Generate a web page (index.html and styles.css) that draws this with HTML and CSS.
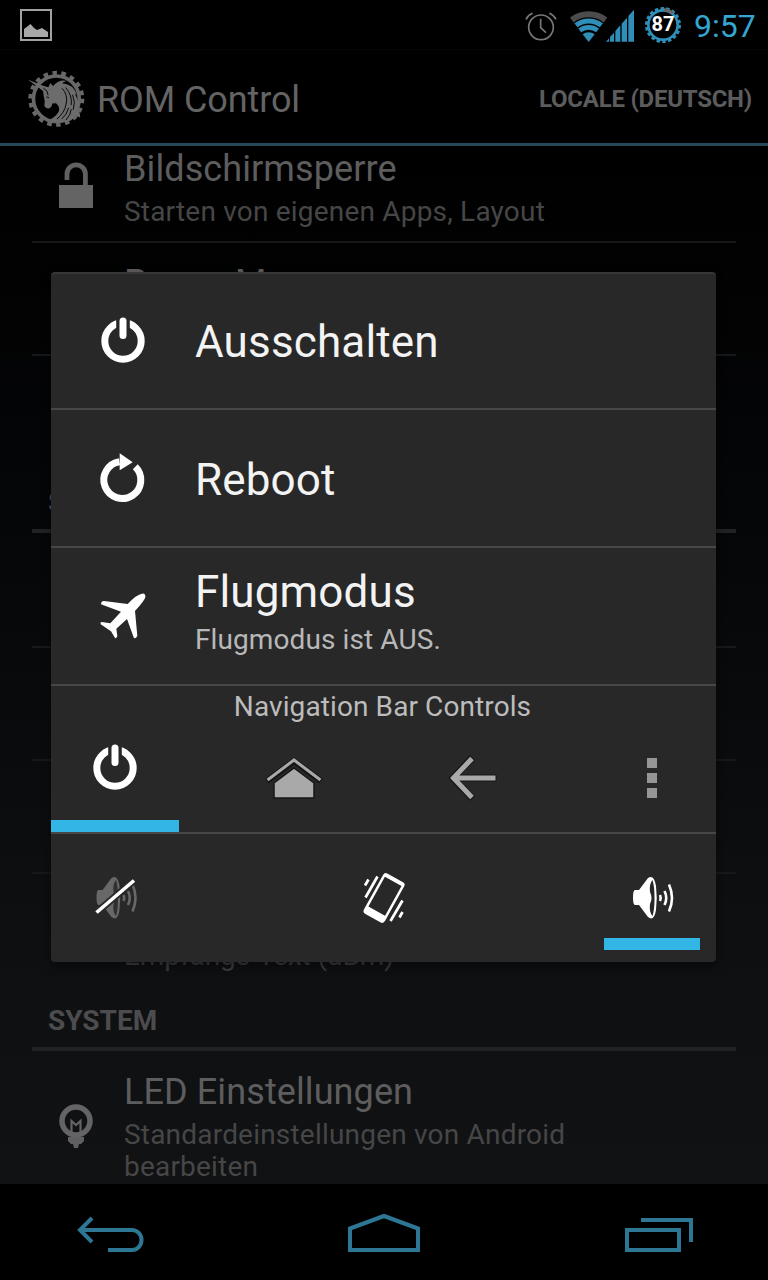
FILE: index.html
```html
<!DOCTYPE html>
<html lang="de">
<head>
<meta charset="UTF-8">
<meta name="viewport" content="width=device-width, initial-scale=1.0">
<title>ROM Control</title>
<link rel="stylesheet" href="styles.css">
</head>
<body>
<div class="screen">
  <div class="status-bar">
    <svg class="photo-icon" viewBox="0 0 32 32">
      <rect x="1" y="1" width="30" height="30" fill="none" stroke="#a2a2a2" stroke-width="2"/>
      <path d="M4 28V20L8 17L10.500 15L14 19L17 21L22 19L28 23V28Z" fill="#a8a8a8"/>
    </svg>
    <div class="status-icons">
      <svg class="alarm-icon" viewBox="42 20 102 102" fill="none" stroke="#777" stroke-width="5">
        <circle cx="93" cy="78" r="37"/>
        <path d="M92 52V79L108 94M48 54Q54 41 68 36M118 36Q131 41 138 54"/>
      </svg>
      <svg class="signal-icon" viewBox="174 20 201 102">
        <g fill="none" stroke="#2f8fb8">
          <path d="M185.600 56A83 83 0 0 1 286.400 56" stroke="#4c4c4c" stroke-width="18"/>
          <path d="M197.800 72A63 63 0 0 1 274.200 72" stroke-width="15"/>
          <path d="M209.300 87A44 44 0 0 1 262.700 87" stroke-width="14"/>
        </g>
        <path d="M218 98.500A29.600 29.600 0 0 1 254 98.500L236 122Z" fill="#2f8fb8"/>
        <path d="M288 121L297 111V121ZM300 121V107L312 94V121ZM316 121V89L331 72V121ZM335 121V67L351 49V121ZM355 121V44L372 25V121Z" fill="#2f8fb8"/>
      </svg>
      <div class="battery">
        <svg viewBox="402 16 114 114" fill="none" stroke="#2f8fb8">
          <circle cx="459" cy="73" r="44" stroke-width="8"/>
          <circle cx="459" cy="73" r="49" stroke-width="10" pathLength="180" stroke-dasharray="6 4"/>
          <path d="M462 27A46 46 0 0 1 488 37" stroke="#666" stroke-width="10"/>
        </svg>
        <span>87</span>
      </div>
      <span class="clock">9:57</span>
    </div>
  </div>

  <div class="action-bar">
    <svg class="app-icon" viewBox="82 206 174 178">
      <g fill="none" stroke="#686868">
        <circle cx="170" cy="296" r="69" stroke-width="11"/>
        <circle cx="170" cy="296" r="78" stroke-width="13" pathLength="180" stroke-dasharray="5 5"/>
      </g>
      <path d="M84 238L128 256L146 261L152 248L160 257Q180 236 202 242Q190 244 188 249Q224 252 232 286L225 279Q240 304 236 326L230 318Q242 335 242 352L227 346Q215 368 192 364Q168 370 146 362Q174 346 178 332Q181 319 169 309L158 310Q156 323 146 325Q136 324 134 316Q137 302 132 288L130 272Z" fill="#6c6c6c"/>
      <path d="M131 264L142 273L145 285M140 290L148 293M187 264Q207 284 199 314Q195 337 172 357M198 262Q219 286 215 315M219 284Q229 306 221 329M207 323Q202 344 186 357M215 327Q214 344 199 360" fill="none" stroke="#080808" stroke-width="3"/>
    </svg>
    <span class="app-title">ROM Control</span>
    <span class="locale">LOCALE (DEUTSCH)</span>
  </div>

  <div class="settings">
    <div class="row first">
      <svg class="row-icon" viewBox="0 0 48 48">
        <path d="M11 20V14A9.200 9.200 0 0 1 29.400 14V26" fill="none" stroke="#606060" stroke-width="4.800"/>
        <path d="M3 25H37V48H3Z" fill="#646464"/>
      </svg>
      <div>
        <div class="row-title">Bildschirmsperre</div>
        <div class="row-sub">Starten von eigenen Apps, Layout</div>
      </div>
    </div>
    <div class="row power-menu">
      <div class="row-icon"></div>
      <div>
        <div class="row-title">Power Menu</div>
      </div>
    </div>
    <div class="row last"></div>
    <div class="section">STATUSBAR</div>
    <div class="row after-section"></div>
    <div class="row"></div>
    <div class="row"></div>
    <div class="row last">
      <div class="row-icon"></div>
      <div>
        <div class="row-title">Signal</div>
        <div class="row-sub faint">Empfangs-Text (dBm)</div>
      </div>
    </div>
    <div class="section">SYSTEM</div>
    <div class="row tall">
      <svg class="row-icon" viewBox="0 0 48 48">
        <circle cx="20" cy="18" r="14" fill="none" stroke="#646466" stroke-width="5.500"/>
        <path d="M15.500 29V18L20 22L24.500 18V29" fill="none" stroke="#646466" stroke-width="2.200"/>
        <path d="M12 34H28V38L25 41H23L22 45H18L17 41H15L12 38Z" fill="#606062"/>
      </svg>
      <div>
        <div class="row-title">LED Einstellungen</div>
        <div class="row-sub">Standardeinstellungen von Android<br>bearbeiten</div>
      </div>
    </div>
  </div>

  <div class="nav-bar">
    <svg width="66" height="38" viewBox="78 1214 66 38">
      <path d="M82 1230H132A9.500 10 0 0 1 132 1250H108M92 1218L80 1230L92 1242"/>
    </svg>
    <svg width="72" height="38" viewBox="349 1214 72 38">
      <path d="M350 1250V1228.500L384 1216L418 1228.500V1250Z"/>
    </svg>
    <svg width="68" height="38" viewBox="625 1214 68 38">
      <path d="M627 1230H679V1250H627ZM641 1220H691V1242"/>
    </svg>
  </div>

  <div class="dialog">
    <div class="option">
      <svg class="option-icon" viewBox="0 0 48 48">
        <circle cx="24" cy="24" r="18.200" fill="none" stroke="#fff" stroke-width="7"/>
        <path d="M17.200 0H30.800V14H17.200Z" fill="#282828"/>
        <path d="M24 4V18.500" stroke="#fff" stroke-width="7" stroke-linecap="round"/>
      </svg>
      <div class="option-title">Ausschalten</div>
    </div>
    <div class="option reboot">
      <svg class="option-icon" viewBox="0.500 -2 48 48">
        <path d="M21 5.700A18.500 18.500 0 1 0 36.800 10.800" fill="none" stroke="#fff" stroke-width="7"/>
        <path d="M21.200 -2.700L34.200 6.300L21.200 14.300Z" fill="#fff"/>
      </svg>
      <div class="option-title">Reboot</div>
    </div>
    <div class="option two-line">
      <svg class="option-icon" viewBox="298 155 144 144">
        <path d="M427 160Q438 158 437 171Q435 181 406 212L413 287Q409 295 403 294L382 236L350 265L353 288Q350 295 346 293L334 273L303 252Q301 245 306 245L332 249L364 214L304 192Q304 182 313 182L384 191Q411 162 427 160Z" fill="#fff"/>
      </svg>
      <div class="option-text">
        <div class="option-title">Flugmodus</div>
        <div class="option-sub">Flugmodus ist AUS.</div>
      </div>
    </div>

    <div class="controls">
      <div class="controls-label">Navigation Bar Controls</div>
      <div class="control-row">
        <div class="control active">
          <svg class="power" viewBox="0 0 48 48">
            <circle cx="24" cy="24" r="18.200" fill="none" stroke="#fff" stroke-width="7"/>
            <path d="M17.200 0H30.800V14H17.200Z" fill="#282828"/>
            <path d="M24 4V18.500" stroke="#fff" stroke-width="7" stroke-linecap="round"/>
          </svg>
        </div>
        <div class="control">
          <svg class="home" viewBox="0 0 60 48">
            <path d="M3 27L30 7L57 27" fill="none" stroke="#161616" stroke-width="6"/>
            <path d="M3.500 26L30 6L56.500 26" fill="none" stroke="#a9a9a9" stroke-width="3"/>
            <path d="M30 14L50 29V44H10V29Z" fill="#a9a9a9" stroke="#161616" stroke-width="1.500"/>
          </svg>
        </div>
        <div class="control">
          <svg class="back" viewBox="0 0 48 48" fill="none">
            <path d="M23.500 3.500L4 24L23.500 44.500M5 24H47.500" stroke="#161616" stroke-width="7"/>
            <path d="M23 4.500L4.500 24L23 43.500M5 24H46.500" stroke="#a9a9a9" stroke-width="5"/>
          </svg>
        </div>
        <div class="control">
          <div class="dots"><i></i><i></i><i></i></div>
        </div>
      </div>
    </div>

    <div class="sound-row">
      <div class="sound">
        <svg viewBox="-0.500 0 48 48">
          <path d="M7 16H11L20 4Q26 0 28 12Q29.500 24 28 36Q26 48 20 43L11 31H7Q5 31 5 23.500Q5 16 7 16Z" fill="#686868"/>
          <path d="M24.500 6Q21 10 22 18Q25 24 22 30Q21 38 24.500 42Q26.500 36 26.500 24Q26.500 12 24.500 6Z" fill="#303030"/>
          <path d="M32 21Q33.500 24 32 27M36.500 17Q40 24 36.500 31M41 10.500Q47 24 41 37.500" fill="none" stroke="#686868" stroke-width="2.600"/>
          <path d="M5 38.500L42.500 6.500" stroke="#282828" stroke-width="7"/>
          <path d="M5 38.500L42.500 6.500" stroke="#fff" stroke-width="3.600"/>
        </svg>
      </div>
      <div class="sound">
        <svg viewBox="0 0 48 48">
          <g transform="rotate(29 24 24)" fill="#fff">
            <path fill-rule="evenodd" d="M15 1H33Q36 1 36 4V43Q36 47 33 47H15Q12 47 12 43V4Q12 1 15 1ZM14.500 5V39H33.500V5Z"/>
          </g>
          <path d="M5.500 23.500L17.500 2.500M5 11.500L8.500 5.500M30.500 47L42.500 26.500M39.500 43.500L42.500 38" stroke="#fff" stroke-width="2.700"/>
        </svg>
      </div>
      <div class="sound active">
        <svg viewBox="0 0 48 48">
          <path d="M7 16H11L20 4Q26 0 28 12Q29.500 24 28 36Q26 48 20 43L11 31H7Q5 31 5 23.500Q5 16 7 16Z" fill="#fff"/>
          <path d="M24.500 6Q21 10 22 18Q25 24 22 30Q21 38 24.500 42Q26.500 36 26.500 24Q26.500 12 24.500 6Z" fill="#282828"/>
          <path d="M32 21Q33.500 24 32 27M36.500 17Q40 24 36.500 31M41 10.500Q47 24 41 37.500" fill="none" stroke="#fff" stroke-width="2.600"/>
        </svg>
      </div>
    </div>
  </div>
</div>
</body>
</html>
```
FILE: styles.css
```css
body {
  margin: 0;
  background-color: #000;
  font-family: Roboto, "Noto Sans", sans-serif;
}

svg {
  display: block;
  flex: none;
  overflow: visible;
}

.screen {
  position: relative;
  width: 768px;
  height: 1280px;
  display: flex;
  flex-direction: column;
  overflow: hidden;
  white-space: nowrap;
}

/* status bar */
.status-bar {
  height: 50px;
  box-sizing: border-box;
  padding: 0 12px 0 20px;
  display: flex;
  align-items: center;
  justify-content: space-between;
  border-bottom: 1px solid #060606;
}

.photo-icon {
  width: 32px;
  height: 32px;
}

.status-icons {
  display: flex;
  align-items: center;
}

.alarm-icon {
  width: 34px;
  height: 34px;
  margin-right: 10px;
}

.signal-icon {
  width: 67px;
  height: 34px;
  margin-right: 9px;
}

.battery {
  display: grid;
  place-items: center;
  width: 38px;
  height: 38px;
  margin-right: 12px;
}

.battery svg,
.battery span {
  grid-area: 1 / 1;
}

.battery svg {
  width: 38px;
  height: 38px;
}

.battery span {
  color: #fff;
  font-size: 20px;
  font-weight: bold;
  padding-bottom: 2px;
}

.clock {
  width: 62px;
  padding-top: 3px;
  color: #36a5d2;
  font-size: 32px;
}

/* action bar */
.action-bar {
  height: 96px;
  box-sizing: border-box;
  padding: 4px 16px 0 27px;
  display: flex;
  align-items: center;
  border-bottom: 3px solid #28475a;
}

.app-icon {
  width: 58px;
  height: 59px;
  margin: 0 12px 0 0;
}

.app-title {
  padding-top: 2px;
  color: #646464;
  font-size: 36px;
  letter-spacing: -0.1px;
}

.locale {
  margin-left: auto;
  color: #5c5c5c;
  font-size: 24px;
  font-weight: bold;
  letter-spacing: -0.25px;
}

/* settings list */
.settings {
  height: 1038px;
  box-sizing: border-box;
  padding: 0 32px;
  overflow: hidden;
  background: linear-gradient(#000, #060709 40%, #0e0f11 75%, #111214);
}

.row {
  height: 113px;
  box-sizing: border-box;
  padding: 20px 0 0 24px;
  display: flex;
  border-bottom: 2px solid #17181a;
}

.row.first {
  margin-top: -16px;
  padding-top: 18px;
}

.row.power-menu {
  padding-top: 19px;
}

.row.last {
  height: 111px;
  padding-top: 18px;
  border-bottom: none;
}

.row.after-section {
  height: 115px;
}

.row.tall {
  height: 151px;
  border-bottom: none;
}

.row-icon {
  width: 48px;
  height: 48px;
  margin: 13px 20px 0 0;
}

.first .row-icon {
  margin-top: 12px;
}

.tall .row-icon {
  margin-top: 32px;
}

.row-title {
  height: 42px;
  margin-bottom: 6px;
  color: #5d5d5e;
  font-size: 36px;
  line-height: 42px;
  letter-spacing: 0.1px;
}

.row-sub {
  color: #464647;
  font-size: 28px;
  line-height: 32px;
  letter-spacing: 0.2px;
}

.row-sub.faint {
  color: #3c3d3f;
  letter-spacing: -0.1px;
}

.section {
  height: 66px;
  box-sizing: border-box;
  padding: 0 16px;
  border-bottom: 4px solid #212224;
  color: #4c4c4e;
  font-size: 28px;
  font-weight: bold;
  line-height: 72px;
}

/* navigation bar */
.nav-bar {
  height: 96px;
  box-sizing: border-box;
  padding: 30px 75px 0 78px;
  display: flex;
  justify-content: space-between;
  background-color: #000;
}

.nav-bar svg {
  fill: none;
  stroke: #2d7795;
  stroke-width: 4;
}

/* power menu */
.dialog {
  position: absolute;
  left: 51px;
  top: 272px;
  width: 665px;
  height: 690px;
  box-sizing: border-box;
  border-top: 2px solid #373737;
  border-radius: 4px;
  background-color: #282828;
  box-shadow: 0 4px 10px 0 rgba(0, 0, 0, 0.45);
}

.option {
  height: 138px;
  box-sizing: border-box;
  padding-left: 48px;
  display: flex;
  align-items: center;
  border-bottom: 2px solid #474747;
}

.option:first-child {
  height: 136px;
}

.option-icon {
  width: 48px;
  height: 48px;
  margin-right: 48px;
}

.option-title {
  padding-top: 2px;
  color: #f3f3f3;
  font-size: 44px;
  line-height: 52px;
  letter-spacing: 0.15px;
}

.reboot .option-title {
  padding-top: 4px;
}

.option-text {
  padding-bottom: 11px;
}

.option-sub {
  color: #b8b8b8;
  font-size: 28px;
  line-height: 34px;
  padding-top: 5px;
  letter-spacing: 0.1px;
}

.controls {
  height: 148px;
  box-sizing: border-box;
  border-bottom: 2px solid #474747;
}

.controls-label {
  height: 40px;
  padding-right: 2px;
  color: #bcbcbc;
  font-size: 28px;
  line-height: 42px;
  letter-spacing: 0.1px;
  text-align: center;
}

.control-row {
  display: flex;
  justify-content: space-between;
}

.control {
  width: 128px;
  height: 106px;
  box-sizing: border-box;
  padding-top: 28px;
  display: flex;
  justify-content: center;
}

.control.active {
  padding-top: 18px;
  border-bottom: 12px solid #33b5e5;
}

.control svg {
  width: 48px;
  height: 48px;
}

.control .home {
  width: 60px;
}

.dots {
  display: flex;
  flex-direction: column;
  gap: 5px;
  padding-top: 4px;
}

.dots i {
  width: 10px;
  height: 10px;
  background-color: #969696;
}

.sound-row {
  height: 128px;
  box-sizing: border-box;
  padding: 0 16px 12px;
  display: flex;
  justify-content: space-between;
}

.sound {
  width: 96px;
  box-sizing: border-box;
  padding-top: 40px;
  display: flex;
  justify-content: center;
  border-bottom: 12px solid transparent;
}

.sound.active {
  border-color: #33b5e5;
}

.sound svg {
  width: 48px;
  height: 48px;
}
```
